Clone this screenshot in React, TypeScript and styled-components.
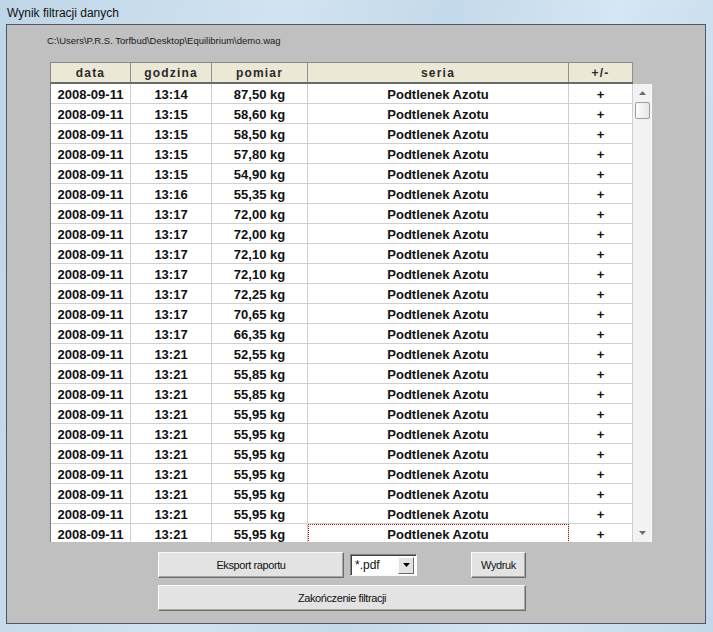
import React from 'react'
import styled, { createGlobalStyle } from 'styled-components'

const GlobalS = createGlobalStyle`
  html, body {
    margin: 0;
    padding: 0;
    background: #c9dcea;
  }
  * { box-sizing: border-box; }
`;

const WindowS = styled.div`
  width: 713px;
  height: 632px;
  display: flex;
  flex-direction: column;
  background: linear-gradient(100deg, #bfd6e8 0%, #d2e3f0 35%, #c4d9ea 55%, #d6e6f2 75%, #c2d8ea 100%);
  font-family: "Liberation Sans", Arial, sans-serif;
  overflow: hidden;
`;

const TitleBar = styled.div`
  height: 24px;
  padding: 1px 0 0 7px;
  display: flex;
  align-items: center;
  font-size: 12px;
  color: #111;
`;

const Client = styled.div`
  margin-left: 6px;
  width: 700px;
  height: 600px;
  border: 1px solid #4e5866;
  background: #c0c0c0;
  display: flex;
  flex-direction: column;
  padding: 10px 0 0 40px;
`;

const PathLabel = styled.div`
  font-size: 9.5px;
  line-height: 11px;
  color: #1a1a1a;
  height: 11px;
`;

const Table = styled.div`
  margin-top: 16px;
  margin-left: 3px;
  width: 602px;
  display: flex;
  flex-direction: column;
`;

const cols = '80px 81px 96px 261px 64px';

const HeaderRow = styled.div`
  display: grid;
  grid-template-columns: ${cols};
  width: 583px;
  border-left: 1px solid #8a8a8a;
  border-top: 1px solid #8a8a8a;
  border-bottom: 2px solid #6a6a6a;
  background: #ebe8d6;
`;

const HeadCell = styled.div`
  height: 19px;
  border-right: 1px solid #8f8f8f;
  display: flex;
  align-items: center;
  justify-content: center;
  font-size: 12px;
  font-weight: bold;
  letter-spacing: 1.2px;
  color: #2a2a2a;
`;

const Body = styled.div`
  display: flex;
  height: 458px;
  width: 602px;
  border-left: 1px solid #7e7e7e;
  background: #fff;
  overflow: hidden;
`;

const Rows = styled.div`
  width: 582px;
  display: flex;
  flex-direction: column;
`;

const Row = styled.div`
  display: grid;
  grid-template-columns: ${cols};
  flex: none;
  height: 20px;
  border-bottom: 1px solid #cfcfcf;
`;

const Cell = styled.div<{ $focused?: boolean }>`
  border-right: 1px solid #cfcfcf;
  display: flex;
  align-items: center;
  justify-content: center;
  padding-top: 1px;
  font-size: 13px;
  font-weight: bold;
  color: #111;
  outline: ${(p) => (p.$focused ? '1px dotted #b01818' : 'none')};
  outline-offset: -1px;
`;

const Scrollbar = styled.div`
  width: 19px;
  background: #f2f2f2;
  display: flex;
  flex-direction: column;
  align-items: center;
  border-right: 1px solid #fafafa;
`;

const ArrowBox = styled.div`
  height: 18px;
  width: 100%;
  display: flex;
  align-items: center;
  justify-content: center;
`;

const Thumb = styled.div`
  width: 15px;
  height: 17px;
  border: 1px solid #9c9c9c;
  border-radius: 2px;
  background: linear-gradient(to right, #fdfdfd, #e6e6e6);
`;

const Spacer = styled.div`
  flex: 1;
`;

const Controls = styled.div`
  margin-top: 10px;
  margin-left: 111px;
  display: flex;
  flex-direction: column;
  gap: 7px;
`;

const ButtonRow = styled.div`
  display: flex;
  align-items: center;
`;

const Button = styled.button<{ $w: number; $ml?: number }>`
  width: ${(p) => p.$w}px;
  height: 26px;
  margin-left: ${(p) => p.$ml || 0}px;
  padding: 0;
  background: #e3e3e3;
  border: 1px solid;
  border-color: #fbfbfb #6b6b6b #6b6b6b #fbfbfb;
  box-shadow: inset -1px -1px 0 #a6a6a6;
  font-family: "Liberation Sans", Arial, sans-serif;
  font-size: 11px;
  letter-spacing: -0.4px;
  color: #111;
`;

const Combo = styled.div`
  width: 67px;
  height: 22px;
  margin-left: 6px;
  display: flex;
  align-items: center;
  background: #fff;
  border: 1px solid;
  border-color: #808080 #fafafa #fafafa #808080;
  box-shadow: inset 1px 1px 0 #404040;
  padding: 0 2px 0 4px;
  font-size: 12px;
  color: #111;
`;

const ComboText = styled.span`
  flex: 1;
`;

const ComboButton = styled.div`
  width: 16px;
  height: 17px;
  display: flex;
  align-items: center;
  justify-content: center;
  background: #e3e3e3;
  border: 1px solid;
  border-color: #fbfbfb #6b6b6b #6b6b6b #fbfbfb;
`;

const data: [string, string][] = [
  ['13:14', '87,50'],
  ['13:15', '58,60'],
  ['13:15', '58,50'],
  ['13:15', '57,80'],
  ['13:15', '54,90'],
  ['13:16', '55,35'],
  ['13:17', '72,00'],
  ['13:17', '72,00'],
  ['13:17', '72,10'],
  ['13:17', '72,10'],
  ['13:17', '72,25'],
  ['13:17', '70,65'],
  ['13:17', '66,35'],
  ['13:21', '52,55'],
  ['13:21', '55,85'],
  ['13:21', '55,85'],
  ['13:21', '55,95'],
  ['13:21', '55,95'],
  ['13:21', '55,95'],
  ['13:21', '55,95'],
  ['13:21', '55,95'],
  ['13:21', '55,95'],
  ['13:21', '55,95'],
];

export default function App() {
  return (
    <WindowS>
      <GlobalS />
      <TitleBar>Wynik filtracji danych</TitleBar>
      <Client>
        <PathLabel>C:\Users\P.R.S. Torfbud\Desktop\Equilibrium\demo.wag</PathLabel>
        <Table>
          <HeaderRow>
            <HeadCell>data</HeadCell>
            <HeadCell>godzina</HeadCell>
            <HeadCell>pomiar</HeadCell>
            <HeadCell>seria</HeadCell>
            <HeadCell>+/-</HeadCell>
          </HeaderRow>
          <Body>
            <Rows>
              {data.map(([time, weight], i) => (
                <Row key={i}>
                  <Cell>2008-09-11</Cell>
                  <Cell>{time}</Cell>
                  <Cell>{weight} kg</Cell>
                  <Cell $focused={i === data.length - 1}>Podtlenek Azotu</Cell>
                  <Cell>+</Cell>
                </Row>
              ))}
            </Rows>
            <Scrollbar>
              <ArrowBox>
                <svg width="7" height="4" viewBox="0 0 7 4"><path d="M3.5 0 L7 4 L0 4 Z" fill="#6e6e6e" /></svg>
              </ArrowBox>
              <Thumb />
              <Spacer />
              <ArrowBox>
                <svg width="7" height="4" viewBox="0 0 7 4"><path d="M0 0 L7 0 L3.5 4 Z" fill="#6e6e6e" /></svg>
              </ArrowBox>
            </Scrollbar>
          </Body>
        </Table>
        <Controls>
          <ButtonRow>
            <Button $w={186}>Eksport raportu</Button>
            <Combo>
              <ComboText>*.pdf</ComboText>
              <ComboButton>
                <svg width="7" height="4" viewBox="0 0 7 4"><path d="M0 0 L7 0 L3.5 4 Z" fill="#000" /></svg>
              </ComboButton>
            </Combo>
            <Button $w={55} $ml={54}>Wydruk</Button>
          </ButtonRow>
          <Button $w={368}>Zakończenie filtracji</Button>
        </Controls>
      </Client>
    </WindowS>
  )
}
